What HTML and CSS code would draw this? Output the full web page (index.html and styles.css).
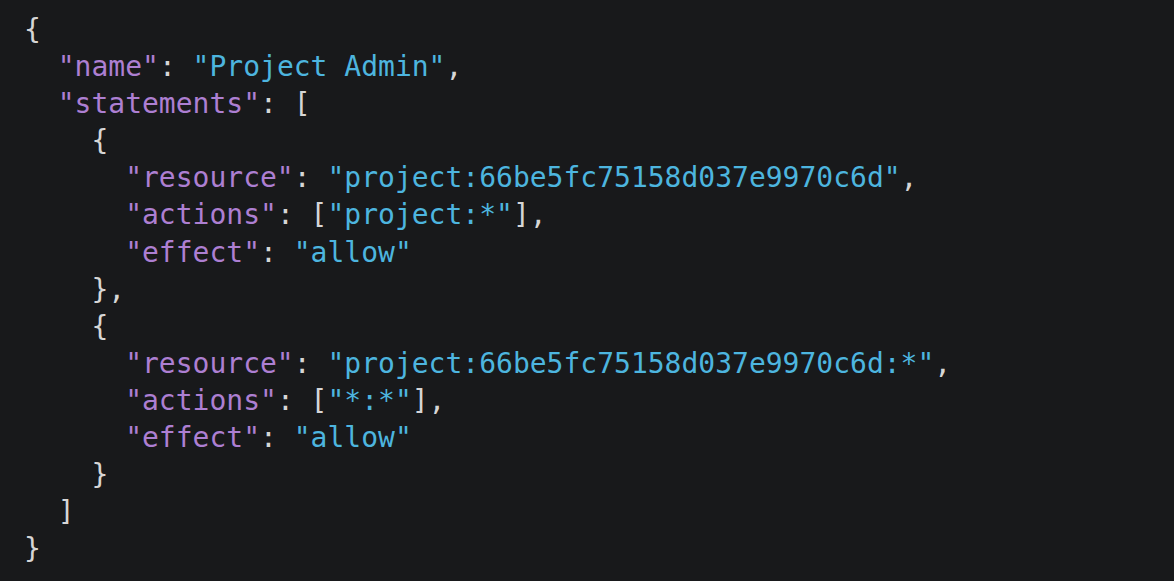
FILE: index.html
```html
<!DOCTYPE html>
<html lang="en">
<head>
<meta charset="utf-8">
<title>Policy JSON</title>
<link rel="stylesheet" href="styles.css">
</head>
<body>
<pre class="code"><span class="p">{</span>
  <span class="k">"name"</span><span class="p">:</span> <span class="s">"Project Admin"</span><span class="p">,</span>
  <span class="k">"statements"</span><span class="p">: [</span>
    <span class="p">{</span>
      <span class="k">"resource"</span><span class="p">:</span> <span class="s">"project:66be5fc75158d037e9970c6d"</span><span class="p">,</span>
      <span class="k">"actions"</span><span class="p">: [</span><span class="s">"project:*"</span><span class="p">],</span>
      <span class="k">"effect"</span><span class="p">:</span> <span class="s">"allow"</span>
    <span class="p">},</span>
    <span class="p">{</span>
      <span class="k">"resource"</span><span class="p">:</span> <span class="s">"project:66be5fc75158d037e9970c6d:*"</span><span class="p">,</span>
      <span class="k">"actions"</span><span class="p">: [</span><span class="s">"*:*"</span><span class="p">],</span>
      <span class="k">"effect"</span><span class="p">:</span> <span class="s">"allow"</span>
    <span class="p">}</span>
  <span class="p">]</span>
<span class="p">}</span></pre>
</body>
</html>
```
FILE: styles.css
```css
html, body {
  margin: 0;
  padding: 0;
  background: #18191b;
  height: 100%;
}
.code {
  margin: 0;
  padding: 11px 24px;
  font-family: "DejaVu Sans Mono", monospace;
  font-size: 28px;
  line-height: 37.1px;
  color: #d6d6d6;
}
.p { color: #d6d6d6; }
.k { color: #ad7fd2; }
.s { color: #4db5df; }
```
